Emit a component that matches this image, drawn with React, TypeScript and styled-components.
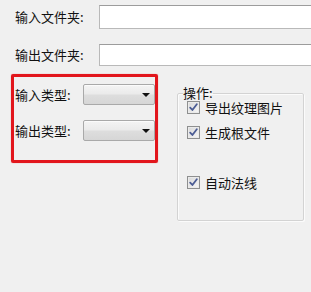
import styled, { createGlobalStyle } from "styled-components";

const GlobalStyle = createGlobalStyle`
  html, body {
    margin: 0;
    padding: 0;
    background: #f0f0f0;
    overflow: hidden;
  }
  body {
    font-family: "Noto Sans CJK SC", "Noto Sans", sans-serif;
    font-size: 13px;
    color: #111;
  }
`;

function Check() {
  return (
    <svg width="9" height="9" viewBox="0 0 9 9">
      <path
        d="M1.2 4.6 L3.4 7 L7.8 1.2"
        fill="none"
        stroke="#4b5c94"
        strokeWidth="1.8"
        strokeLinecap="round"
        strokeLinejoin="round"
      />
    </svg>
  );
}

function CheckRow({ label, gap = 0 }: { label: string; gap?: number }) {
  return (
    <SCheckRow $gap={gap}>
      <SCheckBox>
        <Check />
      </SCheckBox>
      <span>{label}</span>
    </SCheckRow>
  );
}

export default function App() {
  return (
    <SPage>
      <GlobalStyle />
      <SFolders>
        <SFolderRow $height={24}>
          <SLabel>输入文件夹:</SLabel>
          <SInput />
        </SFolderRow>
        <SFolderRow $height={22}>
          <SLabel>输出文件夹:</SLabel>
          <SInput />
        </SFolderRow>
      </SFolders>
      <SLower>
        <SHighlight>
          <STypeRow>
            <STypeLabel>输入类型:</STypeLabel>
            <SCombo>
              <SArrow />
            </SCombo>
          </STypeRow>
          <STypeRow>
            <STypeLabel>输出类型:</STypeLabel>
            <SCombo>
              <SArrow />
            </SCombo>
          </STypeRow>
        </SHighlight>
        <SGroup>
          <SLegend>操作:</SLegend>
          <CheckRow label="导出纹理图片" />
          <CheckRow label="生成根文件" gap={12} />
          <CheckRow label="自动法线" gap={37} />
        </SGroup>
      </SLower>
    </SPage>
  );
}

const SPage = styled.div`
  width: 311px;
  height: 292px;
  display: flex;
  flex-direction: column;
`;

const SFolders = styled.div`
  display: flex;
  flex-direction: column;
  gap: 15px;
  padding: 5px 0 0 15px;
`;

const SFolderRow = styled.div<{ $height: number }>`
  display: flex;
  align-items: center;
  height: ${(p) => p.$height}px;
`;

const SLabel = styled.span`
  width: 84px;
  flex: none;
  line-height: 14px;
`;

const SInput = styled.div`
  flex: 1;
  align-self: stretch;
  margin-right: -4px;
  background: #fff;
  border: 1px solid #b9b9b9;
  border-top-color: #9c9c9c;
`;

const SLower = styled.div`
  display: flex;
  align-items: flex-start;
  gap: 19px;
  padding: 8px 0 0 11px;
`;

const SHighlight = styled.div`
  box-sizing: border-box;
  width: 147px;
  height: 89px;
  border: 3px solid #e2161c;
  border-radius: 2px;
  box-shadow: 0 0 1px rgba(226, 22, 28, 0.6);
  padding: 7px 0 0 1px;
  display: flex;
  flex-direction: column;
  gap: 15px;
`;

const STypeRow = styled.div`
  display: flex;
  align-items: center;
  height: 21px;
`;

const STypeLabel = styled.span`
  width: 68px;
  flex: none;
  line-height: 14px;
`;

const SCombo = styled.div`
  box-sizing: border-box;
  width: 73px;
  height: 21px;
  border: 1px solid #a9a9a9;
  border-radius: 2px;
  background: linear-gradient(#f4f4f4, #ebebeb 45%, #dddddd 55%, #d6d6d6);
  box-shadow: inset 0 1px 0 #fbfbfb;
  display: flex;
  align-items: center;
  justify-content: flex-end;
  padding-right: 4px;
`;

const SArrow = styled.span`
  width: 0;
  height: 0;
  border-left: 4px solid transparent;
  border-right: 4px solid transparent;
  border-top: 4px solid #111;
`;

const SGroup = styled.fieldset`
  box-sizing: border-box;
  width: 127px;
  height: 135px;
  margin: 12px 0 0;
  padding: 1px 0 0 9px;
  border: 1px solid #d3d3d3;
  border-radius: 2px;
  box-shadow: 1px 1px 0 #fbfbfb, inset 1px 1px 0 #fbfbfb;
  display: flex;
  flex-direction: column;
`;

const SLegend = styled.legend`
  padding: 0;
  margin-left: -4px;
  line-height: 14px;
`;

const SCheckRow = styled.div<{ $gap: number }>`
  display: flex;
  align-items: center;
  gap: 5px;
  height: 13px;
  margin-top: ${(p) => p.$gap}px;
  line-height: 14px;
`;

const SCheckBox = styled.span`
  box-sizing: border-box;
  width: 13px;
  height: 13px;
  flex: none;
  border: 1px solid #8e8f8f;
  background: linear-gradient(135deg, #d8d8d8, #f7f7f7);
  box-shadow: inset 0 0 0 1px #eaeaea;
  display: flex;
  align-items: center;
  justify-content: center;
`;
